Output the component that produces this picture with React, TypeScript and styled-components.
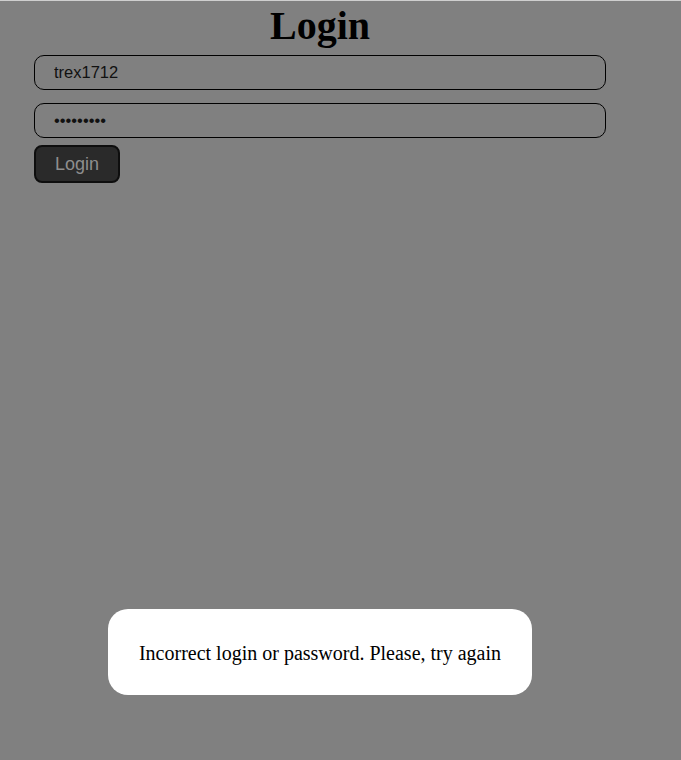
import React from "react";
import styled, { createGlobalStyle } from "styled-components";

const Global = createGlobalStyle`
  html, body { margin: 0; padding: 0; background: #808080; }
  body { font-family: "Liberation Serif", "Times New Roman", serif; }
`;

const Page = styled.div`
  position: relative;
  min-height: 759px;
  border-top: 1px solid #cfcfcf;
  background: #808080;
`;

const Form = styled.form`
  display: flex;
  flex-direction: column;
  align-items: flex-start;
  width: 572px;
  margin-left: 34px;
  padding-top: 3px;
`;

const Title = styled.h1`
  align-self: stretch;
  margin: 0 0 7px;
  text-align: center;
  font-family: "Liberation Serif", "Times New Roman", serif;
  font-weight: bold;
  font-size: 40px;
  line-height: 44px;
  color: #000;
`;

const Field = styled.input<{ $gap: number }>`
  box-sizing: border-box;
  width: 572px;
  height: 35px;
  margin: 0 0 ${(p) => p.$gap}px;
  padding: 0 19px;
  border: 1px solid #000;
  border-radius: 10px;
  background: transparent;
  font-family: "Liberation Sans", Arial, sans-serif;
  font-size: 16.5px;
  color: #111;
  outline: none;
`;

const Button = styled.button`
  box-sizing: border-box;
  width: 86px;
  height: 38px;
  border: 2px solid #0e0e0e;
  border-radius: 8px;
  background: #2a2a2a;
  color: #8e8e8e;
  font-family: "Liberation Sans", Arial, sans-serif;
  font-size: 18px;
  padding: 0;
`;

const Toast = styled.div`
  position: absolute;
  left: 108px;
  top: 608px;
  width: 424px;
  height: 86px;
  box-sizing: border-box;
  border-radius: 20px;
  background: #fff;
  display: flex;
  align-items: center;
  justify-content: center;
  padding-top: 2px;
  font-family: "Liberation Serif", "Times New Roman", serif;
  font-size: 20px;
  color: #000;
`;

export default function App() {
  return (
    <>
      <Global />
      <Page>
        <Form onSubmit={(e) => e.preventDefault()}>
          <Title>Login</Title>
          <Field $gap={13} type="text" defaultValue="trex1712" />
          <Field $gap={7} type="password" defaultValue="123456789" />
          <Button type="submit">Login</Button>
        </Form>
        <Toast>Incorrect login or password. Please, try again</Toast>
      </Page>
    </>
  );
}
